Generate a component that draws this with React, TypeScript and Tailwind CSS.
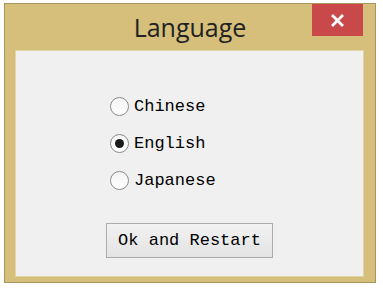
import React from "react";

function Radio({ label, checked }: { label: string; checked?: boolean }) {
  return (
    <div className="flex items-center h-[37px]">
      <div className="w-[19px] h-[19px] rounded-full border border-[#8a8a8a] bg-gradient-to-b from-[#f4f4f4] to-white flex items-center justify-center">
        {checked && <div className="w-[9px] h-[9px] rounded-full bg-[#1a1a1a]" />}
      </div>
      <span className="ml-[5px] text-[17px] text-[#000] leading-none" style={{ fontFamily: '"Liberation Mono", monospace' }}>
        {label}
      </span>
    </div>
  );
}

export default function App() {
  return (
    <div className="w-[383px] h-[291px] bg-white pt-[3px] pl-[4px]">
      <div className="relative w-[372px] h-[280px] border border-[#a8955c] bg-[#d6bf7a] flex flex-col">
        <div className="h-[46px] flex items-center justify-center">
          <span className="text-[25px] text-[#222] leading-none mt-[1px]" style={{ fontFamily: '"Open Sans", "Noto Sans", sans-serif' }}>
            Language
          </span>
        </div>
        <div className="absolute top-0 right-[12px] w-[51px] h-[32px] bg-[#c9484a] flex items-center justify-center">
          <svg width="13" height="13" viewBox="0 0 13 13">
            <path d="M2 2 L11 11 M11 2 L2 11" stroke="white" strokeWidth="2.8" strokeLinecap="square" />
          </svg>
        </div>
        <div className="ml-[10px] mr-[11px] mb-[5px] flex-1 border border-[#e2d5a4] bg-[#f0f0f0] flex flex-col pl-[94px] pt-[37px]">
          <Radio label="Chinese" />
          <Radio label="English" checked />
          <Radio label="Japanese" />
          <button
            className="mt-[24px] ml-[-4px] w-[167px] h-[35px] border border-[#acacac] bg-gradient-to-b from-[#f2f2f2] to-[#e3e3e3] flex items-center justify-center text-[17px] text-[#000]"
            style={{ fontFamily: '"Liberation Mono", monospace' }}
          >
            Ok and Restart
          </button>
        </div>
      </div>
    </div>
  );
}
